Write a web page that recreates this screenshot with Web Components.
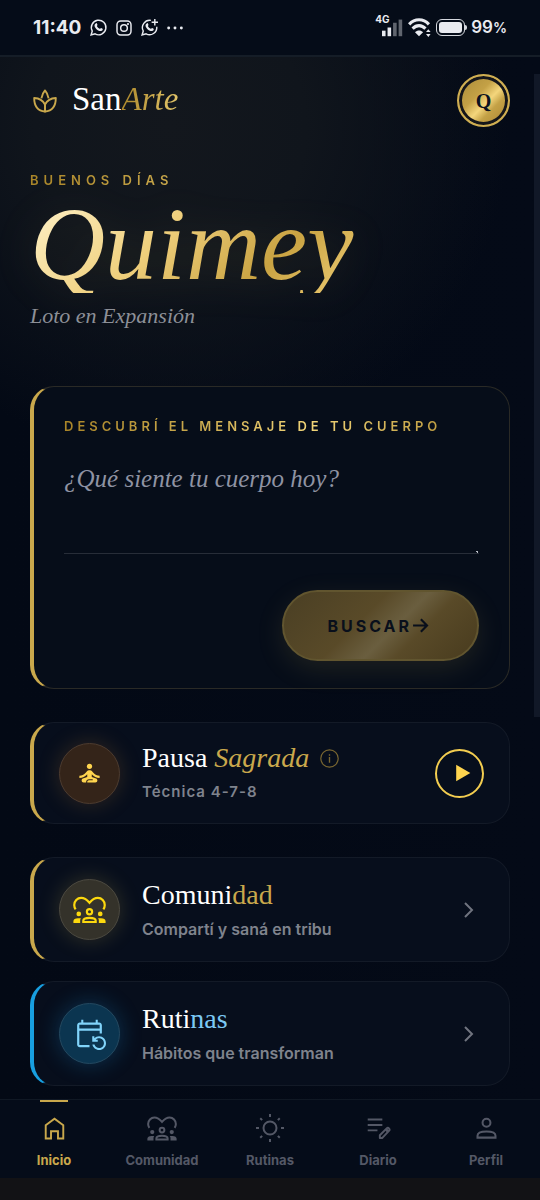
<!DOCTYPE html>
<html lang="es">
<head>
<meta charset="utf-8">
<meta name="viewport" content="width=device-width, initial-scale=1">
<title>SanArte</title>
<style>
  :root {
    --serif: "Liberation Serif", serif;
    --sans: Inter, "Liberation Sans", sans-serif;
    --gold: #c9a84c;
    --gold-text: linear-gradient(90deg, #a98528, #c9a84c 30%, #f0d478 60%, #b08d32);
  }
  html { background: #121215; }
  body { margin: 0; font-family: var(--sans); color: #fff; }
</style>
</head>
<body>
<san-app></san-app>
<script>
const ICONS = {
  lotus: `<g fill="none" stroke="currentColor" stroke-width="1.9" stroke-linejoin="round"><path d="M8.400 9.400C9 6 10.300 3.300 12 1.400 13.700 3.300 15 6 15.600 9.400"/><path d="M1.200 9C6 9.200 10 11.500 12 15.500V22.500C5 22 1.200 17 1.200 9Z"/><path d="M22.800 9C18 9.200 14 11.500 12 15.500V22.500C19 22 22.800 17 22.800 9Z"/></g>`,
  yoga: `<circle cx="12" cy="5.600" r="2.300"/><path d="M21 16v-2c-2.240 0-4.160-.96-5.600-2.680l-1.340-1.600C13.680 9.260 13.120 9 12.530 9h-1.050c-.6 0-1.150.26-1.530.72l-1.340 1.600C7.160 13.040 5.240 14 3 14v2c2.770 0 5.190-1.170 7-3.250V15l-3.880 1.550C5.450 16.820 5 17.480 5 18.210 5 19.200 5.800 20 6.790 20H9v-.5c0-1.380 1.120-2.500 2.500-2.500h3c.28 0 .5.22.5.5s-.22.5-.5.5h-3c-.83 0-1.500.67-1.500 1.500v.5h7.210c.99 0 1.790-.8 1.790-1.790 0-.73-.45-1.390-1.120-1.660L14 15v-2.250c1.810 2.080 4.230 3.250 7 3.250z"/>`,
  community: `<g fill="none" stroke="currentColor" stroke-width="1.600"><path d="M1.900 11.900C1.200 10.900.9 9.900.9 8.800.9 6 3.100 3.600 5.900 3.600 8.400 3.600 10.300 5.100 12 7.100 13.700 5.100 15.600 3.600 18.100 3.600 20.900 3.600 23.100 6 23.100 8.800 23.100 9.900 22.800 10.900 22.100 11.900"/><circle cx="12" cy="13.600" r="1.900"/><path d="M7.500 21.100V20.200C7.500 18.800 9.500 18.100 12 18.100S16.500 18.800 16.500 20.200V21.100Z"/></g><circle cx="4.200" cy="15.200" r="1.700"/><circle cx="19.800" cy="15.200" r="1.700"/><path d="M.3 21.900v-1.400c0-1.300 1.200-2.200 3.400-2.200h2.100c-.4.500-.6 1.100-.6 1.700v1.900zM23.700 21.900v-1.400c0-1.300-1.200-2.200-3.400-2.200h-2.100c.4.500.6 1.100.6 1.700v1.900z"/>`,
  repeat: `<path d="M21 12V6c0-1.100-.9-2-2-2h-1V2h-1.500v2h-9V2H6v2H5c-1.100 0-2 .9-2 2v14c0 1.100.9 2 2 2h7v-1.600H4.600V10h14.800v2zM19.400 8.400H4.600V5.600h14.800zM15.640 20c.43 1.450 1.770 2.500 3.360 2.500 1.930 0 3.500-1.570 3.500-3.500s-1.570-3.500-3.500-3.500c-.95 0-1.820.38-2.450 1H18V18h-4v-4h1.500v1.430C16.400 14.550 17.640 14 19 14c2.760 0 5 2.240 5 5s-2.240 5-5 5c-2.420 0-4.440-1.720-4.900-4z"/>`,
  home: `<path fill="none" stroke="currentColor" stroke-width="1.700" d="M4.200 20.900V9L12 3.300 19.800 9V20.900H15.100V14.400H8.900V20.900Z"/>`,
  sun: `<g fill="none" stroke="currentColor" stroke-width="1.600"><circle cx="12" cy="12" r="5.200"/><path d="M12 .8v2.400M12 20.800v2.400M.8 12h2.400M20.800 12h2.400M4.200 4.200l1.500 1.500M18.300 18.300 19.800 19.800M4.200 19.800l1.500-1.500M18.300 5.700 19.800 4.200"/></g>`,
  note: `<g fill="none" stroke="currentColor" stroke-width="1.800"><path d="M2.500 4.200H16M2.500 9.200H16M2.500 14.200H11.500"/><path stroke-linejoin="round" d="M13.700 21.300V18.700L20 12.400C20.700 11.700 21.500 11.700 22.100 12.300 22.800 13 22.800 13.900 22.100 14.600L15.800 21.300Z"/><path stroke-width="2.500" d="M19.300 13.200 21.300 15.200"/></g>`,
  person: `<g fill="none" stroke="currentColor" stroke-width="1.800"><circle cx="12" cy="6.900" r="3.500"/><path d="M4 20.100V18.500C4 15.800 7.600 14.700 12 14.700S20 15.800 20 18.500V20.100Z"/></g>`,
  chevron: `<path fill="none" stroke="currentColor" stroke-width="2" d="M9 5l7 7-7 7"/>`,
  arrow: `<path fill="none" stroke="currentColor" stroke-width="3" d="M1.500 12H21M12.500 3.200 21.200 12 12.500 20.800"/>`,
  play: `<path d="M5 2v20l17-10z"/>`,
  info: `<g fill="none" stroke="currentColor"><circle cx="12" cy="12" r="11" stroke-width="1.500"/><path stroke-width="1.700" d="M12 10.200V17.500M12 6.500V8.400"/></g>`,
  whatsapp: `<path fill="none" stroke="currentColor" stroke-width="2" d="M1.500 22.500 3.200 17A10.300 10.300 0 1 1 7.200 21Z"/><path d="M8.200 6.200c1-.9 1.600-.3 2.300 1.800.3.800-1 1.400-.7 2.100.8 1.600 2 2.800 3.800 3.600.8.300 1.400-1.500 2.200-1.100 2 1 2.600 1.400 2.100 2.400-1 2.300-3.300 2.500-5.600 1.500-2.600-1.200-4.700-3.200-5.700-5.900-.6-1.700 0-3.500 1.600-4.400z"/>`,
  instagram: `<g fill="none" stroke="currentColor" stroke-width="2.200"><rect x="1.500" y="1.500" width="21" height="21" rx="5.500"/><circle cx="12" cy="12" r="5"/></g><circle cx="18" cy="6" r="1.600"/>`,
  whatsapp2: `<path fill="none" stroke="currentColor" stroke-width="2" d="M14 2A10.300 10.300 0 0 0 3.200 17L1.500 22.500 7.200 21A10.300 10.300 0 0 0 22.300 11"/><path stroke="currentColor" stroke-width="2" d="M19.500 0V9M15 4.500H24"/><path d="M8.200 6.200c1-.9 1.600-.3 2.300 1.800.3.800-1 1.400-.7 2.100.8 1.600 2 2.800 3.800 3.600.8.300 1.400-1.500 2.200-1.100 2 1 2.600 1.400 2.100 2.400-1 2.300-3.300 2.500-5.600 1.500-2.600-1.200-4.700-3.200-5.700-5.900-.6-1.700 0-3.500 1.600-4.400z"/>`,
  dots: `<circle cx="2.500" cy="12" r="2.200"/><circle cx="12" cy="12" r="2.200"/><circle cx="21.500" cy="12" r="2.200"/>`,
  signal: `<rect x="0" y="16" width="4.500" height="7"/><rect x="7" y="12" width="4.500" height="11"/><g opacity=".4"><rect x="14" y="6" width="4.500" height="17"/><rect x="21" y="2" width="4.500" height="21"/></g>`,
  wifi: `<g fill="none" stroke="currentColor" stroke-width="3.200"><path d="M1.200 8.700C7 2.400 16 2.400 21.800 8.700"/><path d="M4.800 13.200C8.800 9 14.300 9 18.200 13.200"/></g><path d="M7.300 17C9.800 14.600 13.300 14.600 15.700 17L11.500 21.200Z"/><path d="M18.800 16.800 21.200 13.800 23.600 16.800ZM18.800 18.800 21.200 21.800 23.600 18.800Z"/>`
};

function define(name, html, setup) {
  const template = document.createElement('template');
  template.innerHTML = html;
  customElements.define(name, class extends HTMLElement {
    constructor() {
      super();
      this.attachShadow({ mode: 'open' }).append(template.content.cloneNode(true));
    }
    connectedCallback() { if (setup) setup(this, this.shadowRoot); }
  });
}

define('ui-icon', `
  <style>
    :host { display: block; flex: none; width: var(--size, 24px); height: var(--size, 24px); }
    svg { display: block; width: 100%; height: 100%; fill: currentColor; overflow: visible; }
  </style>
  <svg viewBox="0 0 24 24" aria-hidden="true"></svg>`,
  (el, root) => { root.querySelector('svg').innerHTML = ICONS[el.getAttribute('name')]; });

define('status-bar', `
  <style>
    :host { display: flex; align-items: center; justify-content: space-between; height: 55px;
      padding: 0 33px; background: #050c18; border-bottom: 2px solid #151d27; color: #e9ebf0; }
    div { display: flex; align-items: center; }
    .left { gap: 9px; }
    .time { font-size: 19px; font-weight: 700; line-height: 24px; }
    .net { position: relative; padding-left: 7px; margin-right: 7px; }
    .net span { position: absolute; left: 0; top: -4px; font-size: 10px; line-height: 10px; font-weight: 700; }
    .battery { box-sizing: border-box; width: 29px; height: 17px; padding: 2px; border: 1px solid #d5d8de; border-radius: 6px; margin: 0 6px 0 5px; position: relative; }
    .battery i { flex: 1; height: 11px; border-radius: 3px; background: #e9ebf0; }
    .battery::after { content: ""; position: absolute; right: -3px; top: 5px; width: 2px; height: 5px; background: #d5d8de; border-radius: 0 2px 2px 0; }
    .pct { font-size: 17px; font-weight: 600; line-height: 24px; }
    .pct small { font-size: 14px; }
  </style>
  <div class="left"><span class="time">11:40</span>
    <ui-icon name="whatsapp" style="--size:17px"></ui-icon>
    <ui-icon name="instagram" style="--size:16px"></ui-icon>
    <ui-icon name="whatsapp2" style="--size:17px"></ui-icon>
    <ui-icon name="dots" style="--size:16px"></ui-icon></div>
  <div><div class="net"><span>4G</span><ui-icon name="signal" style="--size:19px"></ui-icon></div>
    <ui-icon name="wifi" style="--size:23px"></ui-icon>
    <div class="battery"><i></i></div>
    <span class="pct">99<small>%</small></span></div>`);

define('app-header', `
  <style>
    :host { display: flex; align-items: center; justify-content: space-between; }
    a { display: flex; align-items: center; gap: 15px; padding-left: 3px; text-decoration: none;
      color: #fff; font: 33px/36px var(--serif); }
    a span { padding-bottom: 4px; }
    ui-icon { color: var(--gold); }
    em { color: transparent; background: linear-gradient(100deg, #a98528, #e8cb70); background-clip: text; -webkit-background-clip: text; padding-right: 3px; }
    button { box-sizing: border-box; width: 53px; height: 53px; border-radius: 50%; padding: 0; border: 2px solid #cfae52;
      background: linear-gradient(135deg, #a88a38, #c4a146 38%, #f4d67c 55%, #c4a146 68%, #a88330);
      box-shadow: inset 0 0 0 3px #15161a; color: #0b1220; font: bold 20px/24px var(--serif); }
  </style>
  <a href="#inicio"><ui-icon name="lotus"></ui-icon><span>San<em>Arte</em></span></a>
  <button type="button" aria-label="Perfil de Quimey">Q</button>`);

define('greeting-block', `
  <style>
    :host { display: flex; flex-direction: column; }
    p { margin: 0; }
    .hello { font-size: 13px; line-height: 16px; font-weight: 600; letter-spacing: 5px;
      color: transparent; background: var(--gold-text); background-clip: text; -webkit-background-clip: text; }
    h1 { margin: 7px 0 10px; align-self: flex-start; padding-right: 8px; font: italic 104px/98px var(--serif); color: transparent;
      background: linear-gradient(135deg, #fbeab8 10%, #efcf7c 40%, #c9a342 72%, #f0cf78);
      background-clip: text; -webkit-background-clip: text; filter: drop-shadow(0 4px 20px rgba(201,168,76,.15)); }
    .level { font: italic 22px/26px var(--serif); color: #8d9098; }
  </style>
  <p class="hello"><slot name="hello"></slot></p>
  <h1><slot></slot></h1>
  <p class="level"><slot name="level"></slot></p>`);

define('search-card', `
  <style>
    :host { display: block; border: 1px solid #2a2a26; border-left: 4px solid var(--gold); border-radius: 24px;
      padding: 31px 30px 27px 30px; background: #060d19; }
    form { display: flex; flex-direction: column; }
    label { font-size: 13px; line-height: 16px; font-weight: 600; letter-spacing: 4px; color: transparent;
      background: var(--gold-text); background-clip: text; -webkit-background-clip: text; }
    textarea { box-sizing: border-box; width: 100%; height: 94px; margin: 26px 0 36px; padding: 0; border: 0;
      border-bottom: 1px solid #272d38; outline: 0; resize: none; color: #fff; font: italic 25px/38px var(--serif);
      background: radial-gradient(circle, #b9bdc6 1px, transparent 1px) right bottom / 3px 3px no-repeat; }
    textarea::placeholder { color: #8f93a3; opacity: 1; }
    button { align-self: flex-end; box-sizing: border-box; height: 71px; padding: 0 48px 0 43px; display: flex; align-items: center;
      border: 2px solid #61552f; border-radius: 36px; color: #090f1b; font: 700 16px/20px var(--sans); letter-spacing: 3px;
      background: linear-gradient(135deg, #4a3f24, #594a28 40%, #6a5e3f 56%, #594a28 68%, #483b1e);
      box-shadow: 0 8px 28px rgba(201,168,76,.13); }
  </style>
  <form>
    <label for="q">DESCUBRÍ EL MENSAJE DE TU CUERPO</label>
    <textarea id="q" placeholder="¿Qué siente tu cuerpo hoy?"></textarea>
    <button type="button">BUSCAR<ui-icon name="arrow" style="--size:17px"></ui-icon></button>
  </form>`);

define('feature-card', `
  <style>
    :host { box-sizing: border-box; display: flex; align-items: center; gap: 22px; min-height: 105px; padding: 0 25px;
      border: 1px solid #131a27; border-left: 4px solid var(--edge, var(--gold)); border-radius: 24px; background: #070e1c; }
    .badge { flex: none; box-sizing: border-box; width: 61px; height: 61px; display: grid; place-items: center; border-radius: 50%;
      border: 1px solid var(--ring); background: var(--disc); color: var(--ink); box-shadow: 0 0 22px var(--glow); }
    .text { flex: 1; min-width: 0; display: flex; flex-direction: column; gap: 10px; }
    h2 { margin: 0; display: flex; align-items: center; gap: 11px; font: 28px/28px var(--serif); color: #fff; }
    p { margin: 0; font-size: 16px; line-height: 20px; font-weight: 600; color: #7f838d; }
    :host([compact]) { min-height: 102px; }
    :host([compact]) p { font-size: 15px; letter-spacing: 1px; }
  </style>
  <div class="badge"><slot name="icon"></slot></div>
  <div class="text"><h2><slot></slot></h2><p><slot name="sub"></slot></p></div>
  <slot name="action"></slot>`);

define('play-button', `
  <style>
    :host { display: block; flex: none; }
    button { box-sizing: border-box; width: 49px; height: 49px; display: grid; place-items: center; padding: 0 0 0 5px;
      border: 2px solid #f3cd50; border-radius: 50%; background: none; color: #ffd54f; }
  </style>
  <button type="button" aria-label="Reproducir"><ui-icon name="play" style="--size:20px"></ui-icon></button>`);

define('bottom-nav', `
  <style>
    :host { display: block; background: #050c19; border-top: 1px solid #101824; }
    nav { display: grid; grid-template-columns: repeat(5, 1fr); }
    a { display: flex; flex-direction: column; align-items: center; height: 78px; color: #545866; text-decoration: none;
      font-size: 13px; line-height: 16px; font-weight: 700; position: relative; }
    .ic { height: 30px; margin: 13px 0 9px; display: grid; place-items: center; }
    a[aria-current] { color: var(--gold); }
    a[aria-current]::before { content: ""; position: absolute; top: 0; width: 28px; height: 2px; background: var(--gold); }
  </style>
  <nav aria-label="Principal">
    <a href="#inicio" aria-current="page"><span class="ic"><ui-icon name="home" style="--size:27px"></ui-icon></span>Inicio</a>
    <a href="#comunidad"><span class="ic"><ui-icon name="community" style="--size:30px"></ui-icon></span>Comunidad</a>
    <a href="#rutinas"><span class="ic"><ui-icon name="sun" style="--size:30px"></ui-icon></span>Rutinas</a>
    <a href="#diario"><span class="ic"><ui-icon name="note" style="--size:26px"></ui-icon></span>Diario</a>
    <a href="#perfil"><span class="ic"><ui-icon name="person" style="--size:27px"></ui-icon></span>Perfil</a>
  </nav>`);

define('san-app', `
  <style>
    :host { display: block; }
    main { position: relative; display: flex; flex-direction: column; padding: 17px 30px 13px;
      background: radial-gradient(ellipse 340px 330px at 170px 70px, #13171d 0%, #10151c 40%, rgba(5,11,23,0) 100%), linear-gradient(90deg, #030915, #040a17); }
    main::after { content: ""; position: absolute; right: 0; top: 17px; width: 6px; height: 643px; background: #111827; }
    greeting-block { margin: 45px 0 57px; }
    feature-card { margin-top: 33px; }
    feature-card.near { margin-top: 19px; }
    .title { white-space: pre; }
    .gold { color: var(--gold); }
    .sky { color: #7cc8f4; }
    .info { color: #7a6731; }
    .chev { color: #70747f; margin-right: 4px; }
    .pausa { --disc: #342419; --ring: #4c3b2f; --ink: #ffd54f; --glow: rgba(201,130,50,.22); }
    .comu { --disc: #34322a; --ring: #4b4940; --ink: #fcd80e; --glow: rgba(220,190,80,.2); }
    .ruti { --edge: #189fe0; --disc: #0b3550; --ring: #24485f; --ink: #81d4fa; --glow: rgba(24,140,210,.3); }
  </style>
  <status-bar></status-bar>
  <main>
    <app-header></app-header>
    <greeting-block><span slot="hello">BUENOS DÍAS</span>Quimey<span slot="level">Loto en Expansión</span></greeting-block>
    <search-card></search-card>
    <feature-card compact class="pausa">
      <ui-icon slot="icon" name="yoga" style="--size:27px"></ui-icon>
      <span class="title">Pausa <em class="gold">Sagrada</em></span><ui-icon class="info" name="info" style="--size:19px"></ui-icon>
      <span slot="sub">Técnica 4-7-8</span>
      <play-button slot="action"></play-button>
    </feature-card>
    <feature-card class="comu">
      <ui-icon slot="icon" name="community" style="--size:33px"></ui-icon>
      <span class="title">Comuni<span class="gold">dad</span></span>
      <span slot="sub">Compartí y saná en tribu</span>
      <ui-icon slot="action" class="chev" name="chevron" style="--size:24px"></ui-icon>
    </feature-card>
    <feature-card class="ruti near">
      <ui-icon slot="icon" name="repeat" style="--size:33px"></ui-icon>
      <span class="title">Ruti<span class="sky">nas</span></span>
      <span slot="sub">Hábitos que transforman</span>
      <ui-icon slot="action" class="chev" name="chevron" style="--size:24px"></ui-icon>
    </feature-card>
  </main>
  <bottom-nav></bottom-nav>`);
</script>
</body>
</html>
